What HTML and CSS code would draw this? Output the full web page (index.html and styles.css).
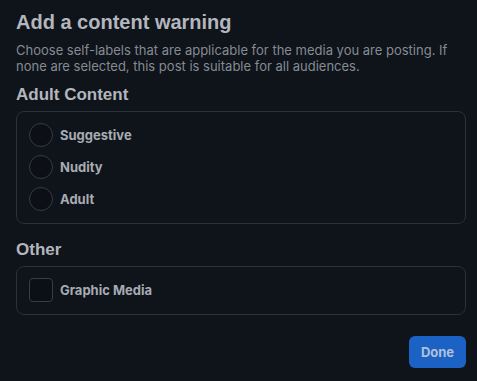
FILE: index.html
```html
<!DOCTYPE html>
<html lang="en">

<head>
    <meta charset="UTF-8">
    <meta name="viewport" content="width=device-width, initial-scale=1.0">
    <title>Add a content warning</title>
    <link rel="stylesheet" href="styles.css">
</head>

<body>
    <div class="dialog">
        <h1 class="title">Add a content warning</h1>
        <p class="desc">Choose self-labels that are applicable for the media you are posting. If none are selected, this post is suitable for all audiences.</p>

        <h2 class="section">Adult Content</h2>
        <div class="group">
            <div class="option"><span class="radio"></span><span class="label">Suggestive</span></div>
            <div class="option"><span class="radio"></span><span class="label">Nudity</span></div>
            <div class="option"><span class="radio"></span><span class="label">Adult</span></div>
        </div>

        <h2 class="section">Other</h2>
        <div class="group">
            <div class="option"><span class="check"></span><span class="label">Graphic Media</span></div>
        </div>

        <div class="actions">
            <button class="done">Done</button>
        </div>
    </div>
</body>

</html>
```

FILE: styles.css
```css
body {
    margin: 0;
    padding: 0;
    background-color: #0f131a;
    font-family: Inter, "Noto Sans", sans-serif;
    color: #b3b7bd;
}

.dialog {
    padding: 9px 11px 0 16px;
}

/* headings are in a plainer, narrower face than the body text */
.title {
    margin: 0;
    font-family: "Liberation Sans", Arial, sans-serif;
    font-size: 20px;
    line-height: 26px;
    font-weight: 700;
}

.desc {
    margin: 7px 0 0 0;
    font-size: 13px;
    line-height: 16px;
    color: #858b93;
}

.section {
    margin: 10px 0 5px 0;
    font-family: "Liberation Sans", Arial, sans-serif;
    font-size: 17px;
    line-height: 22px;
    font-weight: 700;
}

.group {
    border: 1px solid #29313b;
    border-radius: 8px;
    padding: 11px 12px 12px 12px;
    display: flex;
    flex-direction: column;
    gap: 8px;
    margin-bottom: 15px;
}

.option {
    display: flex;
    align-items: center;
    gap: 7px;
}

.radio,
.check {
    width: 22px;
    height: 22px;
    border: 1px solid #353d48;
    background-color: #0c1016;
}

.radio {
    border-radius: 50%;
}

.check {
    border-radius: 4px;
}

.label {
    font-size: 13px;
    font-weight: 700;
    color: #a7abb2;
}

.actions {
    display: flex;
    justify-content: flex-end;
    margin-top: 21px;
}

.done {
    background-color: #1c62c4;
    border: none;
    border-radius: 6px;
    color: #aec1db;
    font-family: Inter, "Noto Sans", sans-serif;
    font-size: 13px;
    font-weight: 700;
    width: 57px;
    height: 32px;
    padding: 0;
}
```
